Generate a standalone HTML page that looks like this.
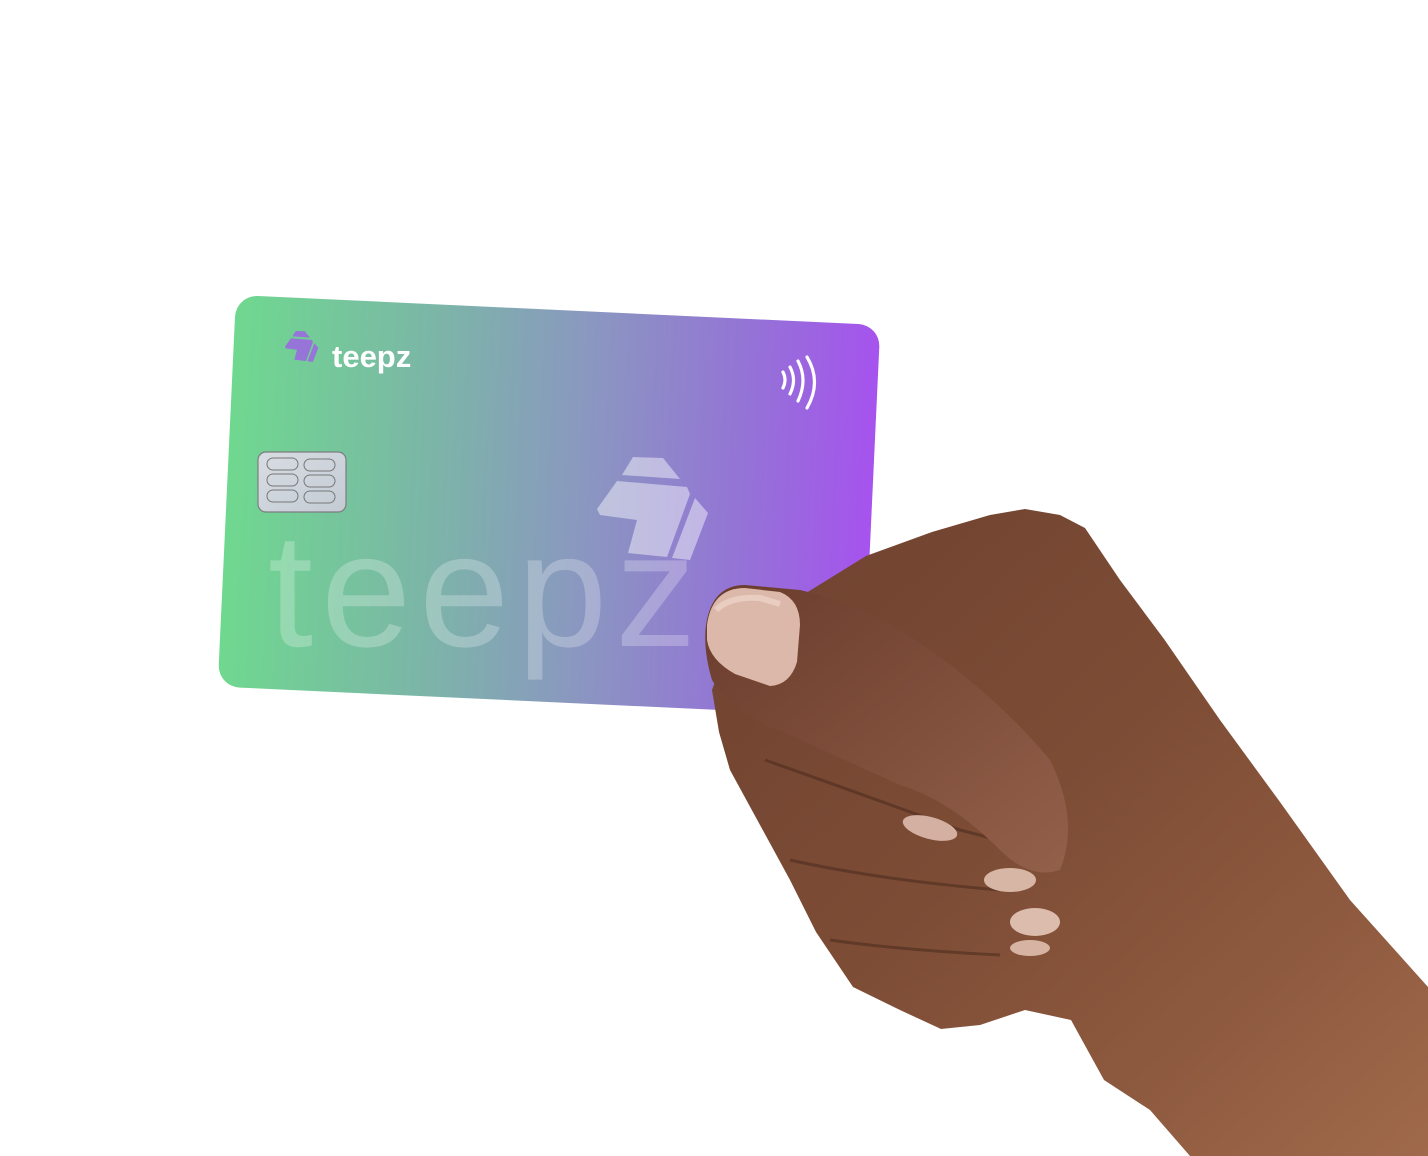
<!DOCTYPE html>
<html><head><meta charset="utf-8"><style>
html,body{margin:0;padding:0;background:#fff;}
svg{display:block}
</style></head><body>
<svg width="1428" height="1156" viewBox="0 0 1428 1156" xmlns="http://www.w3.org/2000/svg">
<defs>
<linearGradient id="cg" x1="0" y1="0" x2="1" y2="0">
<stop offset="0" stop-color="#6fd88f"/>
<stop offset="0.3" stop-color="#7bb7a6"/>
<stop offset="0.55" stop-color="#8a98c0"/>
<stop offset="0.8" stop-color="#9473d6"/>
<stop offset="1" stop-color="#a653ee"/>
</linearGradient>
<linearGradient id="skin" x1="0" y1="0" x2="1" y2="1">
<stop offset="0" stop-color="#6e4230"/>
<stop offset="0.45" stop-color="#7d4c35"/>
<stop offset="0.75" stop-color="#8e5a3f"/>
<stop offset="1" stop-color="#a0694b"/>
</linearGradient>
<linearGradient id="thumb" x1="0" y1="0" x2="1" y2="1">
<stop offset="0" stop-color="#6a3c2c"/>
<stop offset="1" stop-color="#93604a"/>
</linearGradient>
<linearGradient id="chip" x1="0" y1="0" x2="1" y2="1">
<stop offset="0" stop-color="#d8dde3"/>
<stop offset="1" stop-color="#c4cbd3"/>
</linearGradient>
</defs>

<rect x="0" y="0" width="645" height="392" rx="22" fill="url(#cg)" transform="translate(236,295) rotate(2.67)"/>

<g transform="translate(285,331) scale(0.3) translate(-597,-457)" fill="#9a6be0" opacity="0.9">
<polygon points="633,457 663,458 680,479 622,475"/>
<polygon points="617,481 687,487 690,494 667,557 628,553 637,520 600,515 597,509"/>
<polygon points="695,498 708,513 690,560 672,558"/>
</g>
<text x="332" y="367" font-family="Liberation Sans, sans-serif" font-size="31" font-weight="bold" fill="#fff">teepz</text>

<g fill="none" stroke="#fff" stroke-width="3.2" stroke-linecap="round">
<path d="M783 372 Q787 380 783 388"/>
<path d="M790 367 Q797 380 790 394"/>
<path d="M798 361 Q808 380 798 401"/>
<path d="M807 357 Q822 382 807 408"/>
</g>

<rect x="258" y="452" width="88" height="60" rx="8" fill="url(#chip)" stroke="#7d7d80" stroke-width="1.2"/>
<g fill="none" stroke="#777" stroke-width="1">
<rect x="267" y="458" width="31" height="12" rx="6"/>
<rect x="304" y="459" width="31" height="12" rx="6"/>
<rect x="267" y="474" width="31" height="12" rx="6"/>
<rect x="304" y="475" width="31" height="12" rx="6"/>
<rect x="267" y="490" width="31" height="12" rx="6"/>
<rect x="304" y="491" width="31" height="12" rx="6"/>
</g>

<g fill="#ffffff" opacity="0.45">
<polygon points="633,457 663,458 680,479 622,475"/>
<polygon points="617,481 687,487 690,494 667,557 628,553 637,520 600,515 597,509"/>
<polygon points="695,498 708,513 690,560 672,558"/>
</g>
<text x="268" y="646" font-family="Liberation Sans, sans-serif" font-size="162" fill="#ffffff" opacity="0.25" letter-spacing="8">teepz</text>

<path d="M866 556 L932 532 L990 515 L1025 509 L1060 515 L1085 528 L1120 580 L1164 639 L1220 720 L1280 802 L1350 900 L1428 987 L1428 1156 L1190 1156 L1150 1110 L1104 1080 L1071 1020 L1025 1010 L980 1025 L941 1029 L900 1010 L853 987 L816 932 L790 880 L760 825 L730 770 L719 732 L712 690 L730 640 Z" fill="url(#skin)"/>
<g fill="none" stroke="#4a2a1d" stroke-width="3" opacity="0.55">
<path d="M765 760 Q850 790 960 830 Q1000 840 1030 850"/>
<path d="M790 860 Q880 880 1000 890"/>
<path d="M830 940 Q900 950 1000 955"/>
</g>
<ellipse cx="930" cy="828" rx="28" ry="11" fill="#d3b0a2" transform="rotate(15 930 828)"/>
<ellipse cx="1010" cy="880" rx="26" ry="12" fill="#d8b6a6"/>
<ellipse cx="1035" cy="922" rx="25" ry="14" fill="#dcbcad"/>
<ellipse cx="1030" cy="948" rx="20" ry="8" fill="#d6b3a2"/>
<path d="M706 625 Q712 585 745 585 L800 590 Q867 605 930 650 Q1000 700 1050 760 Q1080 820 1060 870 Q1030 880 1000 850 Q950 800 900 785 L790 735 Q730 712 712 680 Q703 650 706 625 Z" fill="url(#thumb)"/>
<path d="M707 625 Q712 588 745 588 L780 592 Q800 600 800 625 L797 662 Q790 685 770 686 L735 674 Q710 660 707 640 Z" fill="#dcb8aa"/>
<path d="M716 610 Q730 596 760 598 L780 604" fill="none" stroke="#efd6ca" stroke-width="6" opacity="0.7"/>
</svg>
</body></html>
